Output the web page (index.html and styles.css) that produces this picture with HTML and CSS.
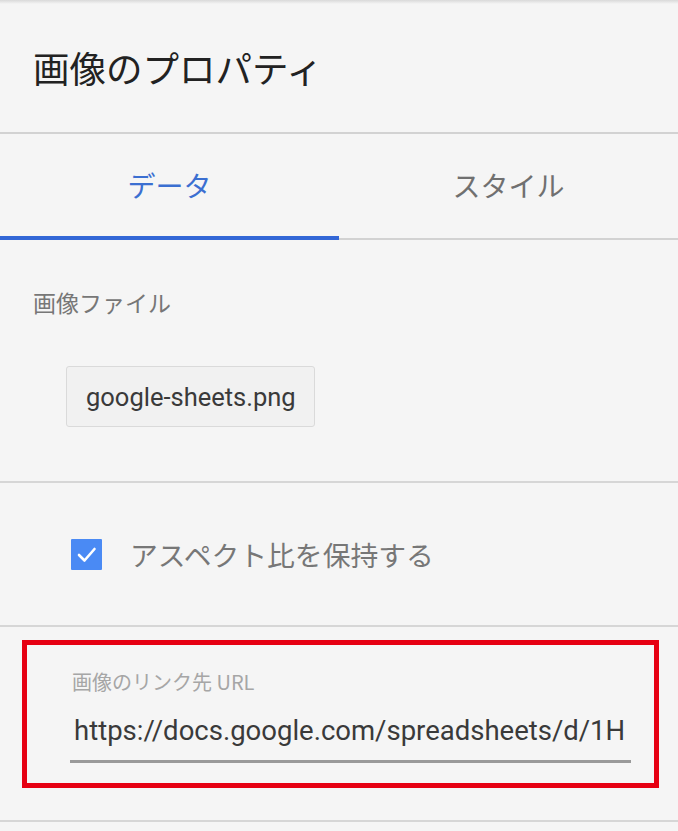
FILE: index.html
```html
<!DOCTYPE html>
<html lang="ja">
<head>
<meta charset="utf-8">
<title>画像のプロパティ</title>
<link rel="stylesheet" href="styles.css">
</head>
<body>
<div class="panel">
  <div class="shade"></div>
  <header class="header">
    <h1 class="title">画像のプロパティ</h1>
  </header>
  <nav class="tabs">
    <div class="tab active">データ</div>
    <div class="tab">スタイル</div>
  </nav>
  <section class="section file">
    <div class="label">画像ファイル</div>
    <div class="file-btn">google-sheets.png</div>
  </section>
  <section class="section aspect">
    <span class="checkbox">
      <svg viewBox="0 0 31 31" width="31" height="31">
        <rect x="0" y="0" width="31" height="31" rx="1" fill="#4a8af4"/>
        <path d="M8 16 L13.5 21.5 L23.5 10" fill="none" stroke="#ffffff" stroke-width="2.6" stroke-linecap="round" stroke-linejoin="round"/>
      </svg>
    </span>
    <span class="check-label">アスペクト比を保持する</span>
  </section>
  <section class="section link">
    <div class="highlight">
      <div class="field-label">画像のリンク先 URL</div>
      <div class="field-input">https://docs.google.com/spreadsheets/d/1H</div>
    </div>
  </section>
</div>
</body>
</html>
```
FILE: styles.css
```css
html, body {
  margin: 0;
  padding: 0;
  background: #f5f5f5;
}
body {
  font-family: Roboto, "Noto Sans CJK JP", sans-serif;
  width: 678px;
  height: 831px;
  overflow: hidden;
}
.panel {
  display: flex;
  flex-direction: column;
}
.shade {
  height: 4px;
  background: linear-gradient(#d9d9d9, #f5f5f5);
}
.header {
  padding: 46px 33px 46px;
  border-bottom: 2px solid #d2d2d2;
}
.title {
  margin: 0;
  font-family: "Noto Sans CJK JP", sans-serif;
  font-weight: 400;
  font-size: 36.5px;
  line-height: 36px;
  color: #222222;
}
.tabs {
  display: flex;
  height: 106px;
}
.tab {
  flex: 1;
  box-sizing: border-box;
  padding-top: 37px;
  text-align: center;
  font-family: "Noto Sans CJK JP", sans-serif;
  font-size: 28px;
  line-height: 28px;
  color: #707070;
  border-bottom: 2px solid #d2d2d2;
}
.tab.active {
  color: #3b6fd1;
  border-bottom: 4px solid #3367d6;
}
.section {
  border-bottom: 2px solid #d6d6d6;
}
.file {
  padding: 51px 0 54px;
}
.label {
  padding-left: 33px;
  font-family: "Noto Sans CJK JP", sans-serif;
  font-size: 23px;
  line-height: 23px;
  color: #777777;
}
.file-btn {
  display: inline-flex;
  align-items: center;
  box-sizing: border-box;
  height: 61px;
  margin: 52px 0 0 66px;
  padding: 0 18px 0 19px;
  background: #f1f1f1;
  border: 1px solid #dadada;
  border-radius: 3px;
  font-size: 25.5px;
  color: #3a3a3a;
}
.aspect {
  display: flex;
  align-items: center;
  height: 144px;
  box-sizing: border-box;
  padding-left: 71px;
}
.checkbox {
  display: flex;
  width: 31px;
  height: 31px;
}
.check-label {
  margin-left: 28px;
  font-family: "Noto Sans CJK JP", sans-serif;
  font-size: 27.8px;
  line-height: 28px;
  color: #777777;
}
.link {
  padding: 13px 19px 32px 22px;
}
.highlight {
  border: 5px solid #e60012;
  padding: 27px 23px 20px 43px;
}
.field-label {
  padding-left: 2px;
  font-family: "Noto Sans CJK JP", sans-serif;
  font-size: 20px;
  line-height: 20px;
  color: #a6a6a6;
}
.field-input {
  margin-top: 22px;
  padding: 0 0 13px 4px;
  font-size: 27.5px;
  line-height: 33px;
  color: #3a3a3a;
  white-space: nowrap;
  border-bottom: 3px solid #9a9a9a;
}
```
